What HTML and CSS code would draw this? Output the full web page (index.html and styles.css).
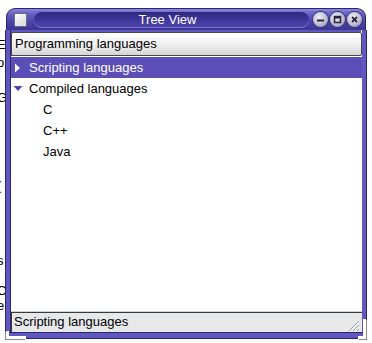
FILE: index.html
```html
<!DOCTYPE html>
<html>
<head>
<meta charset="utf-8">
<link rel="stylesheet" href="styles.css">
</head>
<body>
<div class="desk">
  <div class="behind">
    <div class="frag f1">E</div>
    <div class="frag f2">o</div>
    <div class="frag f3">'</div>
    <div class="frag f4">G</div>
    <div class="frag f5">'</div>
    <div class="frag f6">(</div>
    <div class="frag f7">s</div>
    <div class="frag f8">C</div>
    <div class="frag f9">e</div>
  </div>
  <div class="window">
    <div class="titlebar">
      <div class="winicon"></div>
      <div class="pill"><span class="title">Tree View</span></div>
      <div class="buttons">
        <div class="btn"><svg viewBox="0 0 15 15" width="15" height="15"><rect x="4" y="7.5" width="7" height="2" fill="#2a2540"/></svg></div>
        <div class="btn"><svg viewBox="0 0 15 15" width="15" height="15"><rect x="4.5" y="4.5" width="6" height="6" fill="none" stroke="#2a2540" stroke-width="1.5"/><rect x="4.5" y="4.5" width="6" height="2" fill="#2a2540"/></svg></div>
        <div class="btn"><svg viewBox="0 0 15 15" width="15" height="15"><path d="M5 5 L10 10 M10 5 L5 10" stroke="#2a2540" stroke-width="1.8"/></svg></div>
      </div>
    </div>
    <div class="frame">
      <div class="header">Programming languages</div>
      <div class="list">
        <div class="row selected"><svg class="exp" viewBox="0 0 15 12" width="15" height="12"><path d="M3 1.5 L8 6 L3 10.5 Z" fill="#ffffff"/></svg><span>Scripting languages</span></div>
        <div class="row"><svg class="exp" viewBox="0 0 15 12" width="15" height="12"><path d="M1.5 3 L10.5 3 L6 8 Z" fill="#4a46b0"/></svg><span>Compiled languages</span></div>
        <div class="row child">C</div>
        <div class="row child">C++</div>
        <div class="row child">Java</div>
      </div>
      <div class="status">
        <div class="statustext">Scripting languages</div>
        <div class="grip"><svg viewBox="0 0 14 14" width="14" height="14"><path d="M13 3 L3 13 M13 7 L7 13 M13 11 L11 13" stroke="#9a9a9a" stroke-width="1"/><path d="M13 4 L4 13 M13 8 L8 13" stroke="#ffffff" stroke-width="1"/></svg></div>
      </div>
    </div>
    <div class="bottomedge"></div>
    <div class="corner-l"></div>
    <div class="corner-r"></div>
  </div>
</div>
</body>
</html>
```
FILE: styles.css
```css
html, body {
  margin: 0;
  padding: 0;
  background: #ffffff;
}
body {
  width: 372px;
  height: 343px;
  overflow: hidden;
  font-family: "Liberation Sans", Arial, sans-serif;
  font-size: 13px;
  color: #000000;
}
.desk {
  display: flex;
  padding-top: 8px;
}
.behind {
  width: 6px;
  overflow: hidden;
  flex: none;
}
.frag {
  font-size: 13px;
  line-height: 13px;
  height: 13px;
  text-indent: -3px;
  white-space: nowrap;
}
.f1 { margin-top: 30px; }
.f2 { margin-top: 5px; }
.f3 { margin-top: 6px; }
.f4 { margin-top: 3px; }
.f5 { margin-top: 37px; }
.f6 { margin-top: 25px; }
.f7 { margin-top: 62px; }
.f8 { margin-top: 17px; }
.f9 { margin-top: 2px; }
.window {
  width: 360px;
  position: relative;
  display: flex;
  flex-direction: column;
}
.titlebar {
  height: 22px;
  display: flex;
  align-items: center;
  background: linear-gradient(#8c86dc 0%, #6a62c6 20%, #4d45aa 60%, #3c3492 100%);
  border-radius: 9px 9px 0 0;
  border: 1px solid #2c2668;
  border-bottom: none;
  box-sizing: border-box;
  padding: 0 3px 0 7px;
}
.winicon {
  width: 11px;
  height: 12px;
  background: linear-gradient(135deg, #ffffff, #d6d6dc);
  border: 1px solid #6a6a80;
  border-radius: 1px;
  flex: none;
}
.pill {
  flex: 1;
  height: 16px;
  margin: 0 4px 0 7px;
  border-radius: 8px;
  background: linear-gradient(#2f287e 0%, #3f379a 50%, #5048ae 100%);
  box-shadow: inset 0 -1px 0 #7a73cf;
  display: flex;
  align-items: center;
  justify-content: center;
}
.title {
  color: #ffffff;
  font-size: 13px;
  line-height: 16px;
  margin-right: 8px;
}
.buttons {
  display: flex;
  gap: 2px;
}
.btn {
  width: 15px;
  height: 15px;
  border-radius: 50%;
  background: radial-gradient(circle at 40% 35%, #f0f0f6 0%, #bebcd0 55%, #7e7aa2 100%);
  box-shadow: 0 0 0 1px #3a3478;
  display: flex;
}
.frame {
  height: 300px;
  display: flex;
  flex-direction: column;
  border-left: 4px solid #6058c0;
  border-right: 4px solid #6058c0;
  box-shadow: inset 1px 0 0 #2c2668, inset -1px 0 0 #ffffff, -1px 0 0 #2c2668, 1px 0 0 #2c2668;
  padding-top: 2px;
  background: #6058c0;
}
.header {
  height: 24px;
  box-sizing: border-box;
  margin-left: 1px;
  border: 1px solid #4a4a4a;
  border-radius: 2px;
  background: linear-gradient(#ffffff 0%, #f2f2f2 50%, #d4d4d4 100%);
  padding-left: 3px;
  line-height: 22px;
  flex: none;
}
.list {
  flex: 1;
  background: #ffffff;
  padding-top: 1px;
  margin-left: 1px;
}
.row {
  height: 21px;
  line-height: 21px;
  display: flex;
  align-items: center;
  padding-left: 1px;
  white-space: nowrap;
}
.row .exp {
  flex: none;
}
.row span {
  margin-left: 2px;
}
.selected {
  background: #5b4eb6;
  color: #ffffff;
}
.child {
  padding-left: 32px;
}
.status {
  height: 20px;
  flex: none;
  display: flex;
  align-items: stretch;
  background: #e6e8ea;
  border-top: 1px solid #cfd1d3;
  margin-left: 1px;
}
.statustext {
  flex: 1;
  border-top: 1px solid #3a3a3a;
  border-left: 1px solid #3a3a3a;
  padding-left: 2px;
  line-height: 18px;
  background: #e6e8ea;
}
.grip {
  width: 16px;
  display: flex;
  align-items: flex-end;
  border-top: 1px solid #3a3a3a;
}
.bottomedge {
  height: 5px;
  background: #6058c0;
  border-bottom: 1px solid #2c2668;
  border-top: 1px solid #2c2668;
  margin: 0 -1px;
}
.corner-l {
  position: absolute;
  left: 0;
  bottom: 0;
  width: 20px;
  height: 8px;
  border-left: 3px solid #ffffff;
  border-bottom: 3px solid #ffffff;
  box-shadow: -1px 1px 0 #8a8a8a;
  box-sizing: border-box;
}
.corner-r {
  position: absolute;
  right: 0;
  bottom: 0;
  width: 8px;
  height: 20px;
  border-right: 3px solid #ffffff;
  border-bottom: 3px solid #ffffff;
  box-shadow: 1px 1px 0 #8a8a8a;
  box-sizing: border-box;
}
```
